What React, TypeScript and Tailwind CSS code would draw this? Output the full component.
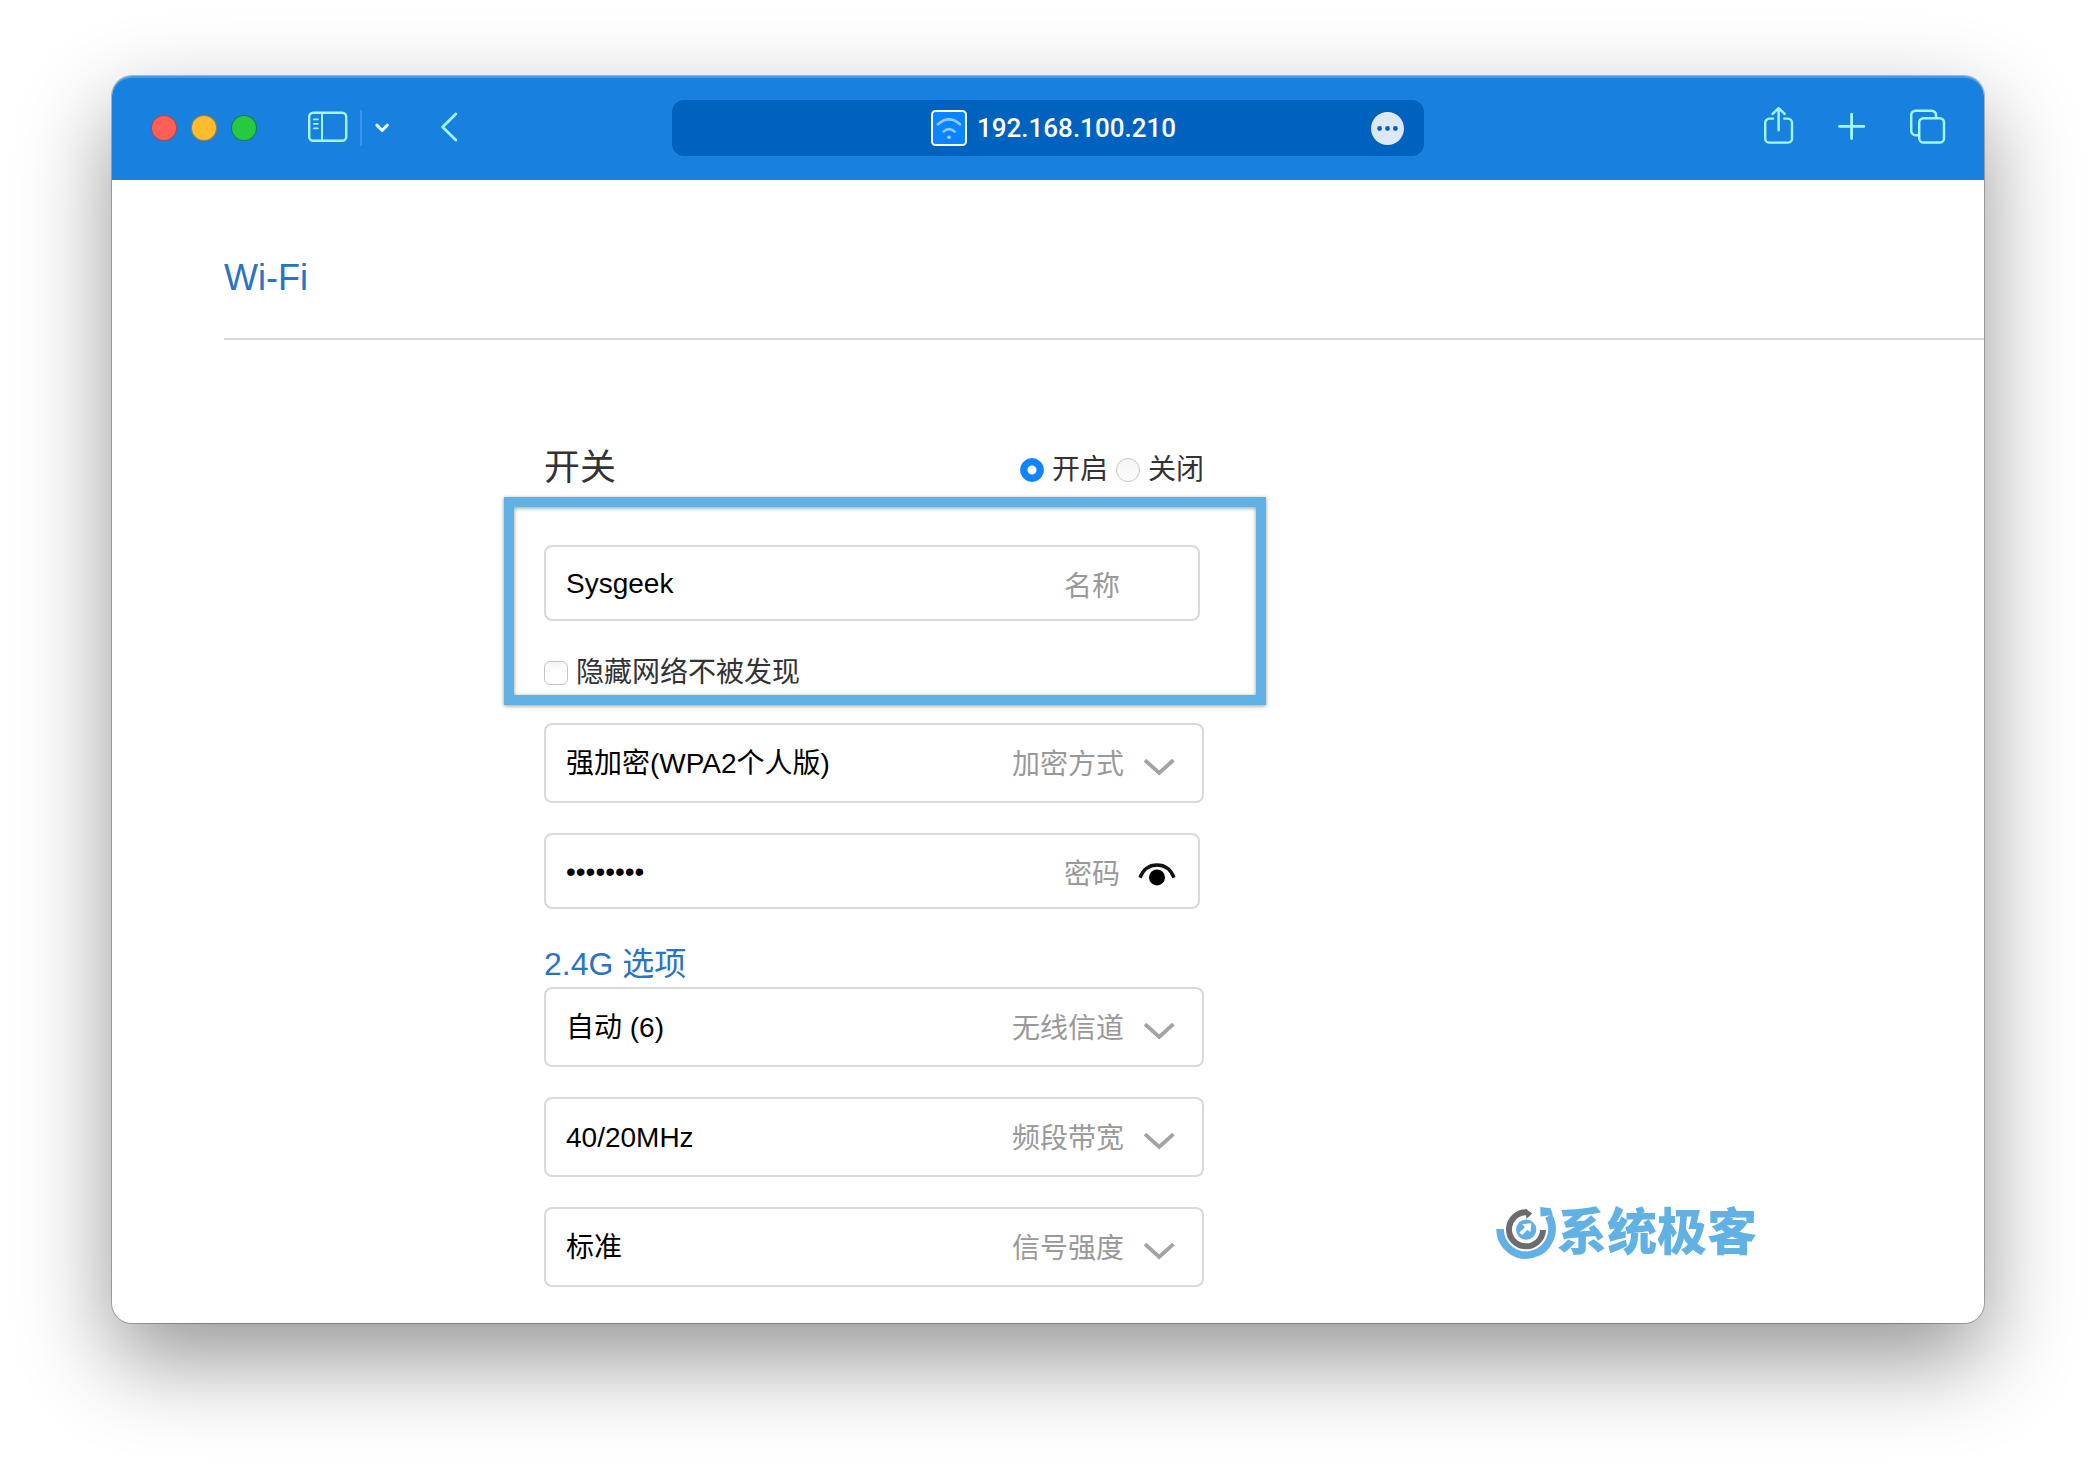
import React, { useState } from 'react';

interface FieldProps {
  id: string;
  label: string;
}

interface SelectFieldProps extends FieldProps {
  options: string[];
}

interface TextFieldProps extends FieldProps {
  type?: 'text' | 'password';
  defaultValue: string;
  children?: React.ReactNode;
}

const radioOptions = [
  { value: 'on', label: '开启' },
  { value: 'off', label: '关闭' },
];

const channelFields: SelectFieldProps[] = [
  { id: 'channel', label: '无线信道', options: ['自动 (6)', '1', '6', '11'] },
  { id: 'bandwidth', label: '频段带宽', options: ['40/20MHz', '20MHz'] },
  { id: 'strength', label: '信号强度', options: ['标准', '穿墙', '节能'] },
];

function SidebarIcon() {
  return (
    <svg className="w-10 h-11" viewBox="0 0 40 44" fill="none" stroke="currentColor" strokeLinecap="round">
      <rect x="1.2" y="6.8" width="37" height="28" rx="4" strokeWidth="2.4" />
      <path d="M14 7v28" strokeWidth="2" />
      <path d="M5.8 13.4h4.2M5.8 17.8h4.2M5.8 22.3h4.2" strokeWidth="1.7" />
    </svg>
  );
}

function ShareIcon() {
  return (
    <svg
      className="w-[30px] h-11"
      viewBox="0 0 30 44"
      fill="none"
      stroke="currentColor"
      strokeWidth="2.4"
      strokeLinecap="round"
      strokeLinejoin="round"
    >
      <path d="M9 12.6H5.4a4.2 4.2 0 0 0-4.2 4.2v15.6a4.2 4.2 0 0 0 4.2 4.2h18.4a4.2 4.2 0 0 0 4.2-4.2V16.8a4.2 4.2 0 0 0-4.2-4.2h-3.6" />
      <path d="M14.6 24.2V2.4M8.6 7.9l6-5.7 6 5.7" />
    </svg>
  );
}

function TabsIcon() {
  return (
    <svg className="w-9 h-11" viewBox="0 0 36 44" fill="none" stroke="currentColor" strokeWidth="2.5">
      <rect x="9.2" y="12.2" width="24.8" height="24.4" rx="4.4" />
      <path d="M8.6 29.2H5.6a4.4 4.4 0 0 1-4.4-4.4V9.1a4.4 4.4 0 0 1 4.4-4.4h16a4.4 4.4 0 0 1 4.4 4.4v2.6" />
    </svg>
  );
}

function Toolbar() {
  return (
    <header className="grid grid-cols-[1fr_minmax(0,752px)_1fr] items-center h-26 rounded-t-[20px] bg-[#1881df] text-[#a3f8ff] shadow-[inset_0_2px_0_rgba(255,255,255,0.2)]">
      <div className="flex items-center pl-10">
        <div className="flex gap-4">
          <button aria-label="关闭窗口" className="size-6 rounded-full bg-[#ff5f57] ring-1 ring-[#a8484f]" />
          <button aria-label="最小化" className="size-6 rounded-full bg-[#febc2e] ring-1 ring-[#9a8240]" />
          <button aria-label="缩放" className="size-6 rounded-full bg-[#28c840] ring-1 ring-[#137c5c]" />
        </div>
        <button aria-label="边栏" className="ml-13">
          <SidebarIcon />
        </button>
        <span className="ml-3 w-0.5 h-9 bg-[#3795f2]" />
        <button aria-label="标签页组" className="ml-3 text-[#e4feff]">
          <svg className="w-4 h-11" viewBox="0 0 16 44" fill="none" stroke="currentColor" strokeWidth="3" strokeLinecap="round" strokeLinejoin="round">
            <path d="M2.8 19.2l5.3 5.1 5.3-5.1" />
          </svg>
        </button>
        <button aria-label="后退" className="ml-12">
          <svg className="w-5 h-11" viewBox="0 0 20 44" fill="none" stroke="currentColor" strokeWidth="2.8" strokeLinecap="round" strokeLinejoin="round">
            <path d="M17.8 8L4.6 20.9l13.2 13" />
          </svg>
        </button>
      </div>

      <div className="flex items-center h-14 pr-5 rounded-xl bg-[#0062bf]">
        <button className="flex flex-1 items-center justify-center gap-2.5 pl-16 font-[Roboto,sans-serif] text-[26px] leading-9 font-medium text-white">
          <svg className="size-9" viewBox="0 0 36 36" fill="none" strokeLinecap="round">
            <rect x="1" y="1" width="34" height="34" rx="3.5" fill="#0a84ff" stroke="#fff" strokeWidth="2" />
            <path d="M7 14.2Q18 4.6 29 14.2" stroke="#8fc9ff" strokeWidth="2.8" />
            <path d="M12.4 21.6Q18 16.6 23.6 21.6" stroke="#8fc9ff" strokeWidth="2.6" />
            <circle cx="18" cy="27.2" r="1.8" fill="#a8d5ff" />
          </svg>
          192.168.100.210
        </button>
        <button aria-label="页面菜单">
          <svg className="size-[33px]" viewBox="0 0 33 33">
            <circle cx="16.5" cy="16.5" r="16.5" fill="#dce8f5" />
            <g fill="#0062bf">
              <circle cx="8.6" cy="16.5" r="2.4" />
              <circle cx="16.5" cy="16.5" r="2.4" />
              <circle cx="24.4" cy="16.5" r="2.4" />
            </g>
          </svg>
        </button>
      </div>

      <div className="flex items-center justify-end gap-11 pr-[38px]">
        <button aria-label="共享">
          <ShareIcon />
        </button>
        <button aria-label="新建标签页">
          <svg className="w-7 h-11" viewBox="0 0 28 44" fill="none" stroke="currentColor" strokeWidth="2.8" strokeLinecap="round">
            <path d="M1.4 20.4h24.4M13.6 8.2v24.4" />
          </svg>
        </button>
        <button aria-label="标签页概览">
          <TabsIcon />
        </button>
      </div>
    </header>
  );
}

function SelectField({ id, label, options }: SelectFieldProps) {
  return (
    <div className="flex items-center h-20 pl-5 pr-[26px] border-2 border-[#d9d9d9] rounded-lg">
      <select id={id} className="flex-1 min-w-0 h-full pt-0.5 appearance-none bg-transparent text-black outline-none">
        {options.map((option) => (
          <option key={option}>{option}</option>
        ))}
      </select>
      <label htmlFor={id} className="pt-1 text-[#999]">
        {label}
      </label>
      <svg className="ml-5 mt-2 w-8 h-5" viewBox="0 0 32 20" fill="none" stroke="#a3a3a3" strokeWidth="3.8">
        <path d="M1 3.2L15.2 16 29.4 3.2" />
      </svg>
    </div>
  );
}

function TextField({ id, label, type = 'text', defaultValue, children }: TextFieldProps) {
  return (
    <div className="flex items-center h-19 mr-1 pl-5 pr-5 border-2 border-[#d9d9d9] rounded-lg">
      <input
        id={id}
        type={type}
        defaultValue={defaultValue}
        className="flex-1 min-w-0 h-full pt-0.5 bg-transparent text-black outline-none"
      />
      <label htmlFor={id} className="pt-2 text-[#999]">
        {label}
      </label>
      <div className="flex w-[58px] pt-1 justify-end">{children}</div>
    </div>
  );
}

function Watermark() {
  return (
    <div className="absolute right-[227px] bottom-[63px] flex items-center text-[50px] leading-[54px] font-black text-[#61b1e4]">
      <svg className="w-[62px] h-[54px]" viewBox="-1 0 62 54" fill="none">
        <path d="M4 23a26 26 0 1 0 48.5-13" stroke="#61b1e4" strokeWidth="7.6" />
        <path d="M44.2 1l10.4 1.2 2.4 6.8-12.4 1.6z" fill="#61b1e4" />
        <path d="M47 24a17 17 0 1 1-16-17.6" stroke="#6b6b70" strokeWidth="6" />
        <path d="M29.4 2.4l6.8 5.2-5.8 5.4z" fill="#6b6b70" />
        <circle cx="30.2" cy="23.6" r="10.2" fill="#61b1e4" />
        <path d="M26.4 18.2l9-1-1 9-2.8-2.4-5.4 5.2-2.8-2.6 5.6-5.2z" fill="#fff" />
      </svg>
      系统极客
    </div>
  );
}

export default function App() {
  const [power, setPower] = useState('on');
  const [showPassword, setShowPassword] = useState(false);

  return (
    <div className="min-h-screen bg-white px-28 pt-19 pb-37 font-['Liberation_Sans','Noto_Sans_CJK_SC',sans-serif]">
      <div className="relative rounded-[20px] bg-white shadow-[0_0_0_1px_rgba(0,0,0,0.25),0_36px_90px_rgba(0,0,0,0.42)]">
        <Toolbar />

        <main className="pl-28 pb-9">
          <h1 className="pt-[78px] pb-10 border-b-2 border-[#d9d9d9] text-4xl/10 text-[#2873c4]">Wi-Fi</h1>

          <form className="w-full max-w-[980px] pt-27 pl-80 text-[28px] leading-9 text-[#333]">
            <div className="flex items-center justify-between">
              <span className="text-4xl/10">开关</span>
              <div className="flex gap-2 pt-1">
                {radioOptions.map((option) => (
                  <label key={option.value} className="flex items-center gap-2">
                    <input
                      type="radio"
                      name="power"
                      checked={power === option.value}
                      onChange={() => setPower(option.value)}
                      className="size-6 appearance-none rounded-full border border-[#c6c6c6] bg-[linear-gradient(#f4f4f4,#fff)] checked:border-[#1a86ff] checked:bg-[radial-gradient(circle,#fff_4px,#1183ff_5px)]"
                    />
                    {option.label}
                  </label>
                ))}
              </div>
            </div>

            <section className="-ml-10 -mr-[62px] mt-[9px] pt-[38px] pl-[30px] pr-[52px] pb-1 border-[10px] border-[#61b1e4] shadow-[0_1px_4px_rgba(0,0,0,0.4),inset_0_1px_4px_rgba(0,0,0,0.4)]">
              <TextField id="ssid" label="名称" defaultValue="Sysgeek" />
              <label className="flex items-center gap-2 mt-[34px]">
                <input
                  type="checkbox"
                  className="size-6 appearance-none rounded-md border border-[#c6c6c6] bg-[linear-gradient(#f4f4f4,#fff_40%)] checked:bg-none checked:bg-[#1183ff]"
                />
                隐藏网络不被发现
              </label>
            </section>

            <div className="flex flex-col gap-[30px] mt-[18px]">
              <SelectField id="security" label="加密方式" options={['强加密(WPA2个人版)', '不加密']} />
              <TextField
                id="password"
                label="密码"
                type={showPassword ? 'text' : 'password'}
                defaultValue="12345678"
              >
                <button type="button" aria-label="显示密码" onClick={() => setShowPassword(!showPassword)}>
                  <svg className="w-10 h-7" viewBox="0 0 40 28" fill="none">
                    <path d="M2 18.6C5.4 10 11.6 6 19 6s13.6 4 17 12.6" stroke="#111" strokeWidth="3.4" />
                    <circle cx="19" cy="18.4" r="8" fill="#000" />
                  </svg>
                </button>
              </TextField>
            </div>

            <h2 className="mt-[35px] mb-[3px] text-[32px] leading-10 text-[#2873c4]">2.4G 选项</h2>
            <div className="flex flex-col gap-[30px]">
              {channelFields.map((field) => (
                <SelectField key={field.id} {...field} />
              ))}
            </div>
          </form>
        </main>

        <Watermark />
      </div>
    </div>
  );
}
